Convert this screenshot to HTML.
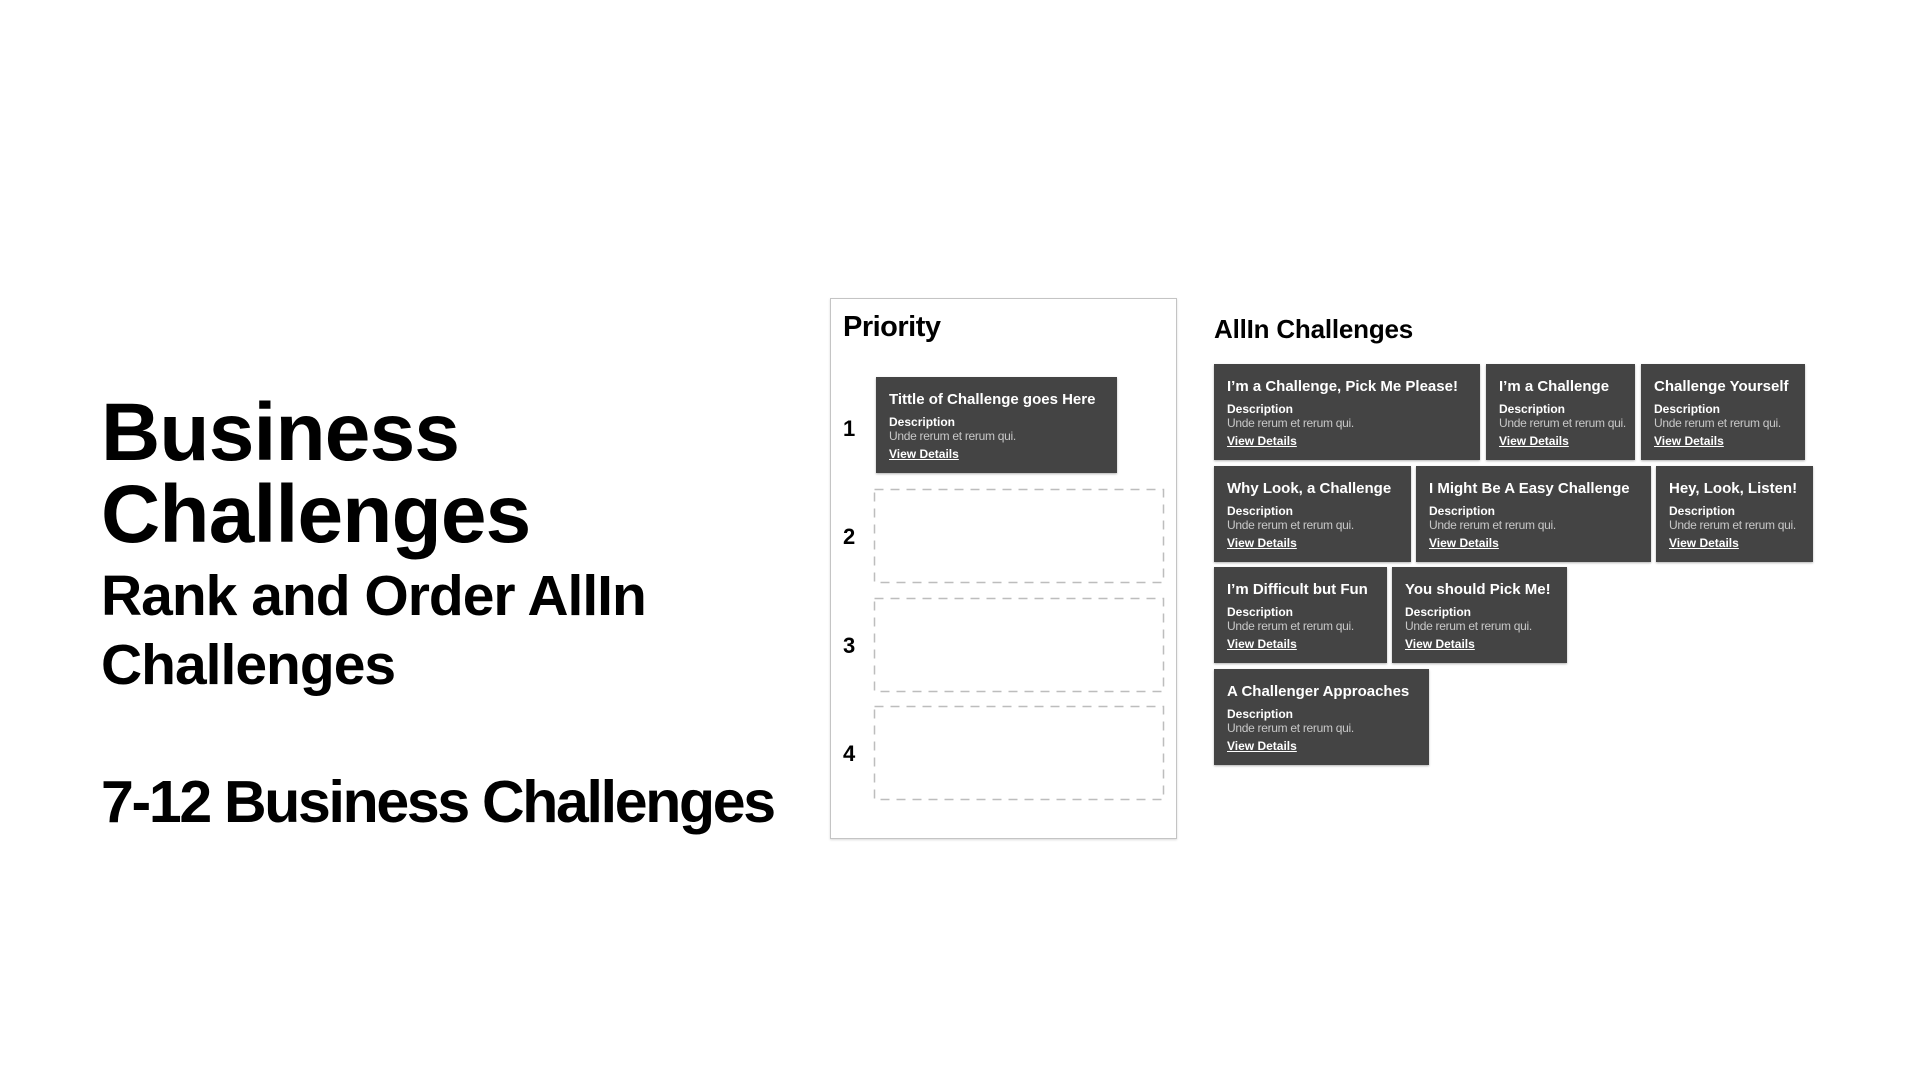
<!DOCTYPE html>
<html><head><meta charset="utf-8"><style>
*{margin:0;padding:0;box-sizing:border-box}
body{width:1920px;height:1080px;background:#fff;position:relative;overflow:hidden;font-family:"Liberation Sans",Arial,sans-serif;color:#000}
.abs{position:absolute}
.h1{left:101px;font-size:82px;font-weight:bold;letter-spacing:-0.8px;line-height:82px;white-space:nowrap}
.h2{left:101px;font-size:57px;font-weight:bold;letter-spacing:-1px;white-space:nowrap}
.pbox{left:830px;top:298px;width:347px;height:541px;border:1.5px solid #c4c4c4;box-shadow:0 1px 2px rgba(0,0,0,.15)}
.card{position:absolute;background:#444;color:#fff;padding:13px 0 0 13px;box-shadow:0 1px 2px rgba(0,0,0,.3);height:96px;white-space:nowrap}
.card .t{font-size:15px;font-weight:bold;line-height:20px;letter-spacing:0}
.card .d{font-size:12px;font-weight:bold;line-height:14px;margin-top:5px}
.card .b{font-size:12px;line-height:14px;color:#c8c8c8;letter-spacing:-0.3px}
.card .v{font-size:12px;font-weight:bold;line-height:16px;margin-top:3px;text-decoration:underline}
.num{position:absolute;left:843px;font-size:22px;font-weight:bold;line-height:22px}
</style></head><body>
<div class="abs h1" style="top:392px">Business</div>
<div class="abs h1" style="top:474px">Challenges</div>
<div class="abs h2" style="top:566px;line-height:60px">Rank and Order AllIn</div>
<div class="abs h2" style="top:635px;line-height:60px">Challenges</div>
<div class="abs h2" style="top:770px;font-size:59px;letter-spacing:-2.3px;line-height:64px">7-12 Business Challenges</div>

<div class="abs pbox"></div>
<div class="abs" style="left:843px;top:311px;font-size:29px;font-weight:bold;letter-spacing:-0.5px">Priority</div>
<div class="num" style="top:418px">1</div>
<div class="num" style="top:526px">2</div>
<div class="num" style="top:635px">3</div>
<div class="num" style="top:743px">4</div>
<div class="card" style="left:876px;top:377px;width:241px">
<div class="t">Tittle of Challenge goes Here</div><div class="d">Description</div><div class="b">Unde rerum et rerum qui.</div><div class="v">View Details</div></div>
<svg class="abs" style="left:0;top:0" width="1920" height="1080">
<g fill="none" stroke="#bdbdbd" stroke-width="1.5" stroke-dasharray="9 7">
<rect x="874.5" y="489.5" width="289" height="93"/>
<rect x="874.5" y="598.5" width="289" height="93"/>
<rect x="874.5" y="706.5" width="289" height="93"/>
</g></svg>

<div class="abs" style="left:1214px;top:314px;font-size:26px;font-weight:bold;letter-spacing:-0.2px">AllIn Challenges</div>
<div class="card" style="left:1214px;top:364px;width:266px"><div class="t">I’m a Challenge, Pick Me Please!</div><div class="d">Description</div><div class="b">Unde rerum et rerum qui.</div><div class="v">View Details</div></div>
<div class="card" style="left:1486px;top:364px;width:149px"><div class="t">I’m a Challenge</div><div class="d">Description</div><div class="b">Unde rerum et rerum qui.</div><div class="v">View Details</div></div>
<div class="card" style="left:1641px;top:364px;width:164px"><div class="t">Challenge Yourself</div><div class="d">Description</div><div class="b">Unde rerum et rerum qui.</div><div class="v">View Details</div></div>

<div class="card" style="left:1214px;top:466px;width:197px"><div class="t">Why Look, a Challenge</div><div class="d">Description</div><div class="b">Unde rerum et rerum qui.</div><div class="v">View Details</div></div>
<div class="card" style="left:1416px;top:466px;width:235px"><div class="t">I Might Be A Easy Challenge</div><div class="d">Description</div><div class="b">Unde rerum et rerum qui.</div><div class="v">View Details</div></div>
<div class="card" style="left:1656px;top:466px;width:157px"><div class="t">Hey, Look, Listen!</div><div class="d">Description</div><div class="b">Unde rerum et rerum qui.</div><div class="v">View Details</div></div>

<div class="card" style="left:1214px;top:567px;width:173px"><div class="t">I’m Difficult but Fun</div><div class="d">Description</div><div class="b">Unde rerum et rerum qui.</div><div class="v">View Details</div></div>
<div class="card" style="left:1392px;top:567px;width:175px"><div class="t">You should Pick Me!</div><div class="d">Description</div><div class="b">Unde rerum et rerum qui.</div><div class="v">View Details</div></div>

<div class="card" style="left:1214px;top:669px;width:215px"><div class="t">A Challenger Approaches</div><div class="d">Description</div><div class="b">Unde rerum et rerum qui.</div><div class="v">View Details</div></div>
</body></html>
